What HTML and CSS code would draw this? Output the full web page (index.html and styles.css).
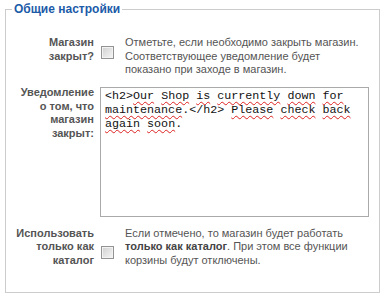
FILE: index.html
```html
<!DOCTYPE html>
<html>

<head>
  <meta charset="UTF-8">
  <title>Общие настройки</title>
  <link rel="stylesheet" href="styles.css">
</head>

<body>
  <fieldset class="box">
    <legend class="box_title">Общие настройки</legend>

    <div class="row row_first">
      <div class="lbl">Магазин<br>закрыт?</div>
      <span class="chk chk_top"></span>
      <div class="desc">Отметьте, если необходимо закрыть магазин. Соответствующее уведомление будет показано при заходе в магазин.</div>
    </div>

    <div class="row">
      <div class="lbl">Уведомление<br>о том, что<br>магазин<br>закрыт:</div>
      <div class="area">&lt;h2&gt;<span class="sp">Our</span> <span class="sp">Shop</span> <span class="sp">is</span> <span class="sp">currently</span> <span class="sp">down</span> <span class="sp">for</span> <span class="sp">maintenance</span>.&lt;/h2&gt; <span class="sp">Please</span> <span class="sp">check</span> <span class="sp">back</span> <span class="sp">again</span> <span class="sp">soon</span>.</div>
    </div>

    <div class="row">
      <div class="lbl">Использовать<br>только как<br>каталог</div>
      <span class="chk chk_mid"></span>
      <div class="desc">Если отмечено, то магазин будет работать <b>только как каталог</b>. При этом все функции корзины будут отключены.</div>
    </div>
  </fieldset>
</body>

</html>
```

FILE: styles.css
```css
* {
  box-sizing: border-box;
}

body {
  margin: 0;
  background-color: #fff;
  font-family: "Liberation Sans", Arial, sans-serif;
  font-size: 11px;
  color: #555;
}

.box {
  margin: 0 0 0 5px;
  width: 375px;
  padding: 18px 0 25px 0;
  border: 1px solid #ccc;
}

.box_title {
  margin-left: 6px;
  padding: 0 2px;
  font-size: 12px;
  line-height: 18px;
  font-weight: bold;
  color: #1c5ba8;
}

.row {
  display: flex;
  align-items: flex-start;
  line-height: 13.5px;
  margin-top: 9.5px;
}

.row_first {
  margin-top: 0;
}

.lbl {
  width: 88px;
  text-align: right;
  font-weight: bold;
  color: #555;
}

.chk {
  width: 13px;
  height: 13px;
  margin-left: 7px;
  border: 1px solid #939393;
  background: linear-gradient(135deg, #cfcfcf, #f6f6f6);
  box-shadow: inset 0 0 0 1px #f2f2f2;
  flex-shrink: 0;
}

.chk_top {
  margin-top: 10px;
}

.chk_mid {
  margin-top: 19px;
}

.desc {
  margin-left: 11px;
  width: 240px;
}

.desc b {
  color: #444;
}

.area {
  margin: 1px 0 0 6px;
  width: 269px;
  height: 130px;
  border: 1px solid #aaa;
  padding: 1px 4px;
  font-family: "Liberation Mono", "Courier New", monospace;
  font-size: 11.7px;
  line-height: 14px;
  color: #111;
}

.sp {
  text-decoration: underline wavy #d22;
  text-decoration-thickness: 1px;
  text-underline-offset: 2px;
}
```
